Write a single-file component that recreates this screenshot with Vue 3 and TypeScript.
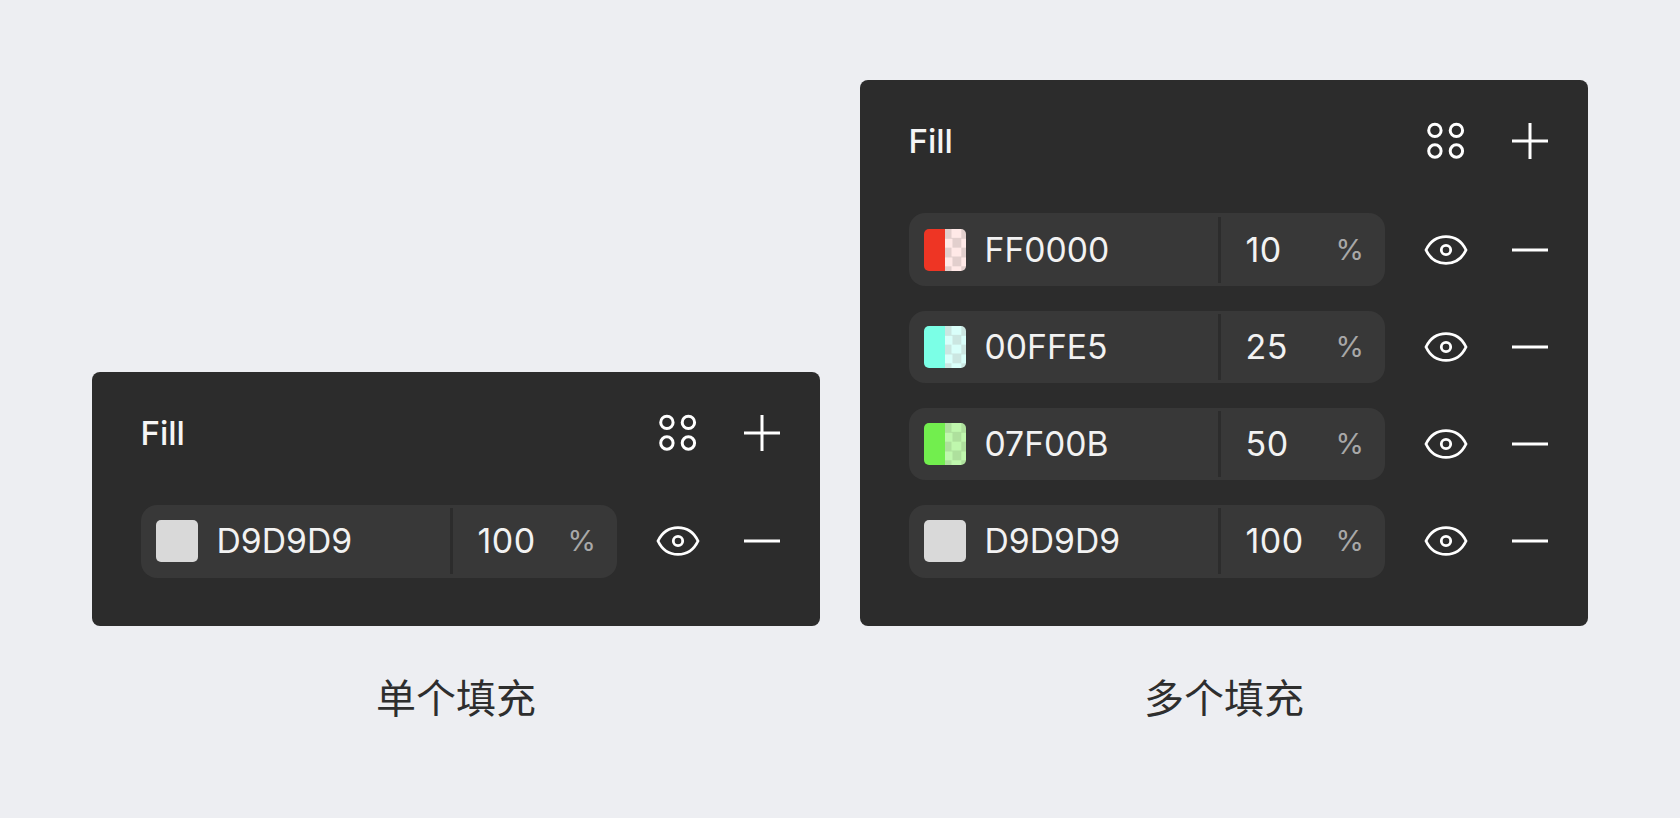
<script setup lang="ts">
interface Fill {
  hex: string
  opacity: number
  solid: string
  light: string
  dark: string
}

const singleFills: Fill[] = [
  { hex: 'D9D9D9', opacity: 100, solid: '#d9d9d9', light: '#d9d9d9', dark: '#d9d9d9' }
]

const multiFills: Fill[] = [
  { hex: 'FF0000', opacity: 10, solid: '#ee3524', light: '#ffe9e7', dark: '#e2cfcd' },
  { hex: '00FFE5', opacity: 25, solid: '#7bffe6', light: '#d9fffa', dark: '#cbe6e1' },
  { hex: '07F00B', opacity: 50, solid: '#72ee4e', light: '#bff7ad', dark: '#aee09d' },
  { hex: 'D9D9D9', opacity: 100, solid: '#d9d9d9', light: '#d9d9d9', dark: '#d9d9d9' }
]

const panels = [
  { caption: '单个填充', fills: singleFills },
  { caption: '多个填充', fills: multiFills }
]

function swatchStyle(fill: Fill) {
  return {
    '--solid': fill.solid,
    '--light': fill.light,
    '--dark': fill.dark
  }
}
</script>

<template>
  <div class="page">
    <div v-for="panel in panels" :key="panel.caption" class="column">
      <section class="panel">
        <header class="panel-head">
          <span class="title">Fill</span>
          <span class="icon-btn wide">
            <svg width="38" height="38" viewBox="0 0 38 38" fill="none" stroke="currentColor" stroke-width="3">
              <circle cx="7.900" cy="8.400" r="6.200" />
              <circle cx="29.400" cy="8.400" r="6.200" />
              <circle cx="7.900" cy="29" r="6.200" />
              <circle cx="29.400" cy="29" r="6.200" />
            </svg>
          </span>
          <span class="icon-btn">
            <svg width="36" height="36" viewBox="0 0 36 36" fill="none" stroke="currentColor" stroke-width="3">
              <path d="M0 18H36M18 0V36" />
            </svg>
          </span>
        </header>

        <div class="rows">
          <div v-for="fill in panel.fills" :key="fill.hex" class="row">
            <div class="field">
              <div class="color-part">
                <span class="swatch" :style="swatchStyle(fill)"></span>
                <span class="hex">{{ fill.hex }}</span>
              </div>
              <div class="opacity-part">
                <span class="value">{{ fill.opacity }}</span>
                <span class="percent">%</span>
              </div>
            </div>
            <span class="icon-btn wide">
              <svg width="44" height="32" viewBox="0 0 44 32" fill="none" stroke="currentColor" stroke-width="2.800">
                <path d="M2 16C6 7.500 13 2.600 22 2.600S38 7.500 42 16C38 24.500 31 29.400 22 29.400S6 24.500 2 16Z" />
                <circle cx="22" cy="16" r="4.700" />
              </svg>
            </span>
            <span class="icon-btn">
              <svg width="36" height="36" viewBox="0 0 36 36" fill="none" stroke="currentColor" stroke-width="3">
                <path d="M0 18H36" />
              </svg>
            </span>
          </div>
        </div>
      </section>
      <p class="caption">{{ panel.caption }}</p>
    </div>
  </div>
</template>

<style>
html,
body {
  margin: 0;
  background: #edeef2;
}
</style>

<style scoped>
.page {
  display: flex;
  align-items: flex-end;
  gap: 40px;
  box-sizing: border-box;
  width: 1680px;
  height: 818px;
  padding: 0 92px 96px;
  background: #edeef2;
  font-family: Inter, "Noto Sans CJK SC", sans-serif;
}

.column {
  display: flex;
  flex-direction: column;
  width: 728px;
}

.panel {
  box-sizing: border-box;
  padding: 42px 40px 48.500px 48.500px;
  border-radius: 8px;
  background: #2c2c2c;
  color: #fff;
}

.panel-head {
  display: flex;
  align-items: center;
  gap: 44px;
  height: 38px;
  margin-bottom: 53.300px;
}

.title {
  flex: 1;
  font-size: 33px;
  font-weight: 550;
  line-height: 38px;
  color: #f5f5f5;
}

.rows {
  display: flex;
  flex-direction: column;
  gap: 24.700px;
}

.row {
  display: flex;
  align-items: center;
  gap: 44.500px;
}

.field {
  display: flex;
  align-items: center;
  width: 477px;
  height: 72.500px;
  margin-right: -6px;
  border-radius: 16px;
  background: #383838;
}

.color-part {
  display: flex;
  flex: none;
  align-items: center;
  gap: 19px;
  box-sizing: border-box;
  width: 309px;
  height: 100%;
  padding-left: 15px;
}

.swatch {
  flex: none;
  width: 42px;
  height: 42px;
  border-radius: 5px;
  background:
    linear-gradient(90deg, var(--solid) 50%, transparent 50%),
    conic-gradient(var(--light) 25%, var(--dark) 0 50%, var(--light) 0 75%, var(--dark) 0) 0 0 / 18.670px 18.670px;
}

.hex {
  font-size: 33.700px;
  line-height: 40px;
  color: #f2f2f2;
}

.opacity-part {
  display: flex;
  flex: 1;
  align-items: center;
  justify-content: space-between;
  box-sizing: border-box;
  height: 66px;
  padding: 0 21px 0 25px;
  border-left: 3px solid #2c2c2c;
}

.value {
  font-size: 34px;
  letter-spacing: 0.500px;
  line-height: 40px;
  color: #f2f2f2;
}

.percent {
  font-size: 29px;
  line-height: 40px;
  color: #a8a8a8;
}

.icon-btn {
  display: flex;
  flex: none;
  align-items: center;
  justify-content: center;
  width: 36px;
  height: 36px;
}

.icon-btn.wide {
  width: 44px;
}

.caption {
  margin: 44px 0 0;
  font-family: "Noto Sans CJK SC", sans-serif;
  font-size: 40px;
  font-weight: 400;
  line-height: 52px;
  text-align: center;
  color: #2e2e2e;
}
</style>
